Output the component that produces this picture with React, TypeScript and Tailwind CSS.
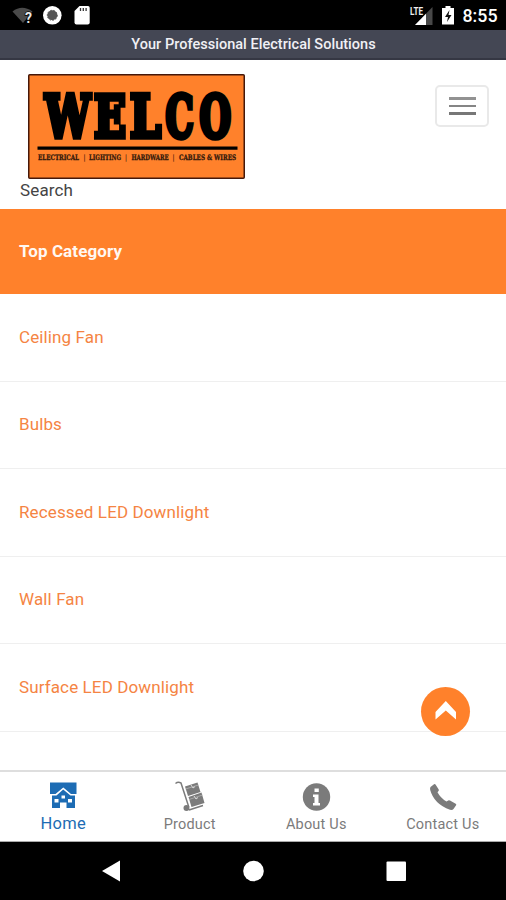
import type { ReactNode } from "react";

const categories = ["Ceiling Fan", "Bulbs", "Recessed LED Downlight", "Wall Fan", "Surface LED Downlight"];

const logoLetters = [
  { ch: "W", x: 35.5, w: 45.5 },
  { ch: "E", x: 84.5, w: 32 },
  { ch: "L", x: 120.5, w: 31 },
  { ch: "C", x: 156, w: 28 },
  { ch: "O", x: 190, w: 31.5 },
];

const taglines = [
  { t: "ELECTRICAL", x: 28.5, w: 41 },
  { t: "|", x: 74, w: 2 },
  { t: "LIGHTING", x: 79.5, w: 32 },
  { t: "|", x: 115.5, w: 2 },
  { t: "HARDWARE", x: 122, w: 37 },
  { t: "|", x: 163, w: 2 },
  { t: "CABLES & WIRES", x: 169.5, w: 57 },
];

function StatusBar() {
  return (
    <div className="flex h-[30px] shrink-0 items-center justify-between bg-black text-white">
      <svg width="100" height="30" viewBox="0 0 100 30">
        <path d="M12.500 11.500Q22 4 32.500 11.500L23 23Z" fill="#4a4a4a" />
        <text x="25" y="22.500" fontSize="14" fontWeight="700" fontFamily="Roboto, sans-serif" fill="#e8e8e8" stroke="#000" strokeWidth="1.500" paintOrder="stroke">?</text>
        <circle cx="52.300" cy="15.300" r="9.300" fill="#fff" />
        <circle cx="52.300" cy="15.300" r="5" fill="#555" stroke="#555" strokeWidth="1" strokeDasharray="1.500 1.500" />
        <path d="M79.500 6H88Q89.700 6 89.700 7.700V22.500Q89.700 24.500 87.700 24.500H76.500Q74.500 24.500 74.500 22.500V11Z" fill="#fff" />
        <path d="M80.500 8v3M83.300 8v3M86.100 8v3" stroke="#333" strokeWidth="1.300" />
      </svg>
      <svg width="106" height="30" viewBox="400 0 106 30">
        <path d="M415 25L432.500 7V25Z" fill="#484848" />
        <path d="M415 25L426 13.700V25Z" fill="#fff" />
        <text x="410" y="14.500" fontSize="10.500" fontWeight="700" fontFamily="Roboto, sans-serif" fill="#eee" stroke="#000" strokeWidth="2" paintOrder="stroke" textLength="13" lengthAdjust="spacingAndGlyphs">LTE</text>
        <path d="M445.500 6h5v2h3.500v16.500h-12V8h3.500Z" fill="#fff" />
        <path d="M449.500 10l-4.500 7h3l-1 5 4.500-7h-3Z" fill="#111" />
        <text x="462.500" y="22.300" fontSize="18.500" fontWeight="500" fontFamily="Roboto, sans-serif" fill="#fff" textLength="35" lengthAdjust="spacingAndGlyphs">8:55</text>
      </svg>
    </div>
  );
}

function Logo() {
  return (
    <svg className="block overflow-visible" width="217" height="105" viewBox="18.500 0 217 105">
      <rect x="19.250" y="0.750" width="215.500" height="103.500" rx="1" fill="#ff812b" stroke="#45180a" strokeWidth="1.500" />
      {logoLetters.map((l) => (
        <text key={l.ch} x={l.x} y="63.200" fontSize="58" fontWeight="700" fontFamily="DejaVu Serif, serif" stroke="#000" strokeWidth="5.500" textLength={l.w} lengthAdjust="spacingAndGlyphs">{l.ch}</text>
      ))}
      <path d="M28 74.200H228" stroke="#000" strokeWidth="3.200" />
      {taglines.map((l) => (
        <text key={l.x} x={l.x} y="86.300" fontSize="7.500" fontWeight="700" fontFamily="DejaVu Serif, serif" fill="#32190b" stroke="#32190b" strokeWidth={l.t === "|" ? 0 : 0.3} textLength={l.w} lengthAdjust="spacingAndGlyphs">{l.t}</text>
      ))}
    </svg>
  );
}

function Tab({ label, active, children }: { label: string; active?: boolean; children: ReactNode }) {
  return (
    <div className={"flex flex-1 flex-col items-center pt-2 " + (active ? "text-[#1d6cb4]" : "text-[#7b7b7b]")}>
      <svg width="34" height="34" viewBox="0 0 34 34" fill="currentColor">{children}</svg>
      <span className={active ? "text-[16.500px] leading-5 tracking-[0.300px]" : "mt-px text-[14.500px] leading-5 tracking-[0.200px]"}>{label}</span>
    </div>
  );
}

export default function App() {
  return (
    <div className="relative flex h-[900px] w-[506px] flex-col overflow-hidden bg-white font-[Roboto,sans-serif]">
      <StatusBar />
      <div className="flex h-[30px] shrink-0 items-center justify-center border-b-2 border-[#353743] bg-[#444754] pt-[2px] pl-px text-[14.500px] font-medium tracking-[0.030px] text-[#f0f0f5]">
        <span>Your Professional Electrical Solutions</span>
      </div>
      <header className="flex h-[148.500px] shrink-0 items-start justify-between pt-3.5 pr-[17px] pl-[20px]">
        <div>
          <div className="pl-2"><Logo /></div>
          <div className="text-[17px] leading-[22px] tracking-[0.150px] text-[#444]">Search</div>
        </div>
        <button aria-label="Menu" className="mt-[11px] flex h-[42px] w-[54px] flex-col items-center justify-center gap-[5px] rounded-[5px] border-2 border-[#e9e9e9]">
          <span className="h-[2.500px] w-[27px] bg-[#929292]" />
          <span className="h-[2.500px] w-[27px] bg-[#858585]" />
          <span className="h-[2.500px] w-[27px] bg-[#777]" />
        </button>
      </header>
      <main className="min-h-0 flex-1 overflow-hidden">
        <div className="flex h-[85.500px] items-center bg-[#ff812b] pl-[19px] text-[17px] font-bold tracking-[0.100px] text-[#fff8f2]">Top Category</div>
        {categories.map((c) => (
          <div key={c} className="flex h-[87.600px] items-center border-b border-[#efefef] pl-[19px] text-[17px] tracking-[0.120px] text-[#f58443]">{c}</div>
        ))}
      </main>
      <button aria-label="Back to top" className="absolute top-[687px] left-[421px] size-[49px] rounded-full bg-[#ff812b]">
        <svg width="49" height="49" viewBox="0 0 49 49"><path d="M14.500 25L24.800 14L35 25V32.500L24.800 23.500L14.500 32.500Z" fill="#fff" /></svg>
      </button>
      <nav className="flex h-[72px] shrink-0 border-t-2 border-b border-t-[#dedede] border-b-[#aaa] bg-white">
        <Tab label="Home" active>
          <path d="M4 2.500H30.500V14H25L17.300 7.500L9.500 14H4Z" />
          <path fillRule="evenodd" d="M17.200 9.500L24.500 15.500H29V28H20.500V22.500H14V28H6V15.500H10.500ZM8.500 19V22.500H12.500V19ZM22 19V22.500H26V19ZM15.500 15.500H19V18.500H15.500Z" />
        </Tab>
        <Tab label="Product">
          <path d="M2.500 3.500Q5 1.500 8 3L15.800 27M16 30L30 25.500" fill="none" stroke="currentColor" strokeWidth="1.500" />
          <path d="M12 6.500L24.500 2.500L27.500 12L15 16Z M15.500 17L28.500 12.500L31.500 23L18.500 27Z" />
          <path d="M18 5L20 8L22 6.500M21 16L23 19L25 17.500" fill="none" stroke="#ddd" strokeWidth="1" />
          <path d="M12.500 9L25.500 5M16 19.500L29.500 15" fill="none" stroke="#bbb" strokeWidth="0.700" />
          <circle cx="13.500" cy="28" r="3" />
        </Tab>
        <Tab label="About Us">
          <circle cx="17.500" cy="17" r="13.700" />
          <path d="M15.500 8.500H19.800V12H15.500ZM14 14.500H19.500V23H21V25.500H14V23H15.500V17H14Z" fill="#fff" />
        </Tab>
        <Tab label="Contact Us">
          <path d="M4.500 7L8 4.200Q9 3.700 9.700 4.700L12.700 9.500Q13.200 10.500 12.300 11.200L11.500 12.200Q14.500 18 20.500 21.500L22.200 20.400Q23 20 24 20.500L29.700 23.700Q30.700 24.300 30.100 25.300L27.500 29Q26.500 30.300 24 29.800Q8 24 4.200 10Q3.800 8 4.500 7Z" />
        </Tab>
      </nav>
      <div className="h-[58px] shrink-0 bg-black">
        <svg width="506" height="58" fill="#fff"><path d="M102 29L120 18.500V39.500Z" /><circle cx="253.500" cy="29" r="10.300" /><rect x="386.500" y="19.500" width="19.500" height="19.500" rx="1" /></svg>
      </div>
    </div>
  );
}
